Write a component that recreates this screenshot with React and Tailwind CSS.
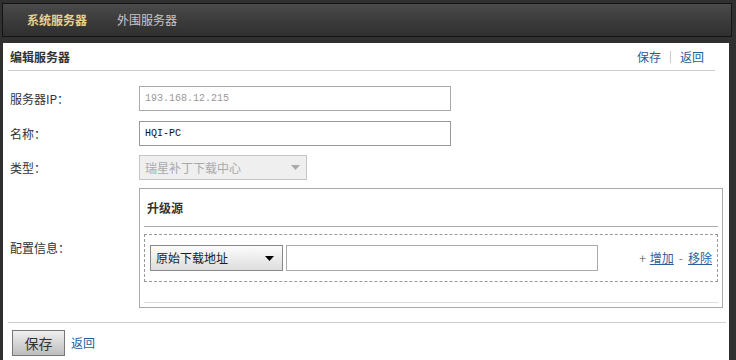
import React from "react";

const cjk = { fontFamily: '"Noto Sans CJK SC", "Liberation Sans", sans-serif' };

function Arrow({ color = "#000" }) {
  return (
    <svg width="9" height="5" viewBox="0 0 9 5">
      <path d="M0 0 L9 0 L4.5 5 Z" fill={color} />
    </svg>
  );
}

export default function App() {
  return (
    <div
      className="w-[736px] h-[360px] overflow-hidden bg-[#303030] flex flex-col text-[12px] leading-none"
      style={cjk}
    >
      {/* top bar */}
      <div className="mt-[3px] ml-[2px] w-[730px] h-[34px] border border-[#141414] bg-gradient-to-b from-[#4a4a4a] to-[#2f2f2f] flex items-center shrink-0">
        <span className="ml-[24px] font-bold text-[#e6d28e]">系统服务器</span>
        <span className="ml-[30px] text-[#c8c8c8]">外围服务器</span>
      </div>

      {/* white panel */}
      <div className="mt-[6px] ml-[3px] w-[726px] flex-1 bg-white flex flex-col">
        <div className="ml-[5px] mr-[14px] h-[28px] border-b border-[#cfcfcf] flex items-center justify-between">
          <span className="ml-[2px] font-bold text-[#333]">编辑服务器</span>
          <span className="flex items-center text-[#1d5d9b]">
            <span>保存</span>
            <span className="mx-[9px] w-px h-[12px] bg-[#ccc]"></span>
            <span className="mr-[11px]">返回</span>
          </span>
        </div>

        <div className="flex flex-col pl-[7px]">
          {/* IP */}
          <div className="mt-[15px] flex items-center h-[25px]">
            <span className="w-[129px] text-[#333]">服务器IP：</span>
            <div className="w-[312px] h-[25px] border border-[#aaa] flex items-center px-[5px] text-[#999] text-[10px]" style={{ fontFamily: '"Liberation Mono", monospace' }}>
              193.168.12.215
            </div>
          </div>
          {/* name */}
          <div className="mt-[10px] flex items-center h-[25px]">
            <span className="w-[129px] text-[#333]">名称：</span>
            <div className="w-[312px] h-[25px] border border-[#999] flex items-center px-[5px] text-[#111] text-[10px]" style={{ fontFamily: '"Liberation Mono", monospace' }}>
              HQI-PC
            </div>
          </div>
          {/* type */}
          <div className="mt-[9px] flex items-center h-[25px]">
            <span className="w-[129px] text-[#333]">类型：</span>
            <div className="w-[168px] h-[25px] border border-[#c4c4c4] bg-[#efefef] flex items-center justify-between pl-[5px] pr-[6px] text-[#aaa]">
              <span>瑞星补丁下载中心</span>
              <Arrow color="#aaa" />
            </div>
          </div>
          {/* config */}
          <div className="mt-[8px] flex items-center">
            <span className="w-[129px] text-[#333]">配置信息：</span>
            <div className="w-[584px] h-[120px] border border-[#aaa] flex flex-col px-[4px]">
              <div className="h-[38px] border-b border-[#aaa] flex items-center pl-[3px] font-bold text-[#333]">升级源</div>
              <div className="mt-[7px] h-[48px] border border-dashed border-[#999] flex items-center pl-[5px] pr-[5px]">
                <div className="w-[133px] h-[26px] border border-[#888] bg-gradient-to-b from-[#fcfcfc] to-[#dedede] flex items-center justify-between pl-[5px] pr-[8px] text-[#222]">
                  <span>原始下载地址</span>
                  <Arrow />
                </div>
                <div className="ml-[3px] w-[312px] h-[26px] border border-[#aaa]"></div>
                <div className="ml-auto flex items-center text-[#2d5f9f]">
                  <span className="text-[#777] mr-[4px]">+</span>
                  <span className="underline">增加</span>
                  <span className="text-[#777] mx-[5px]">-</span>
                  <span className="underline">移除</span>
                </div>
              </div>
              <div className="mt-[20px] border-b border-[#ddd]"></div>
            </div>
          </div>
        </div>

        <div className="mt-[14px] ml-[5px] mr-[3px] border-b border-[#cfcfcf]"></div>
        <div className="mt-[7px] ml-[9px] flex items-center">
          <div className="w-[53px] h-[26px] border border-[#777] bg-gradient-to-b from-[#f0f0f0] to-[#bdbdbd] flex items-center justify-center text-[14px] text-[#333]">
            保存
          </div>
          <span className="ml-[6px] text-[#1d5d9b]">返回</span>
        </div>
      </div>
    </div>
  );
}
